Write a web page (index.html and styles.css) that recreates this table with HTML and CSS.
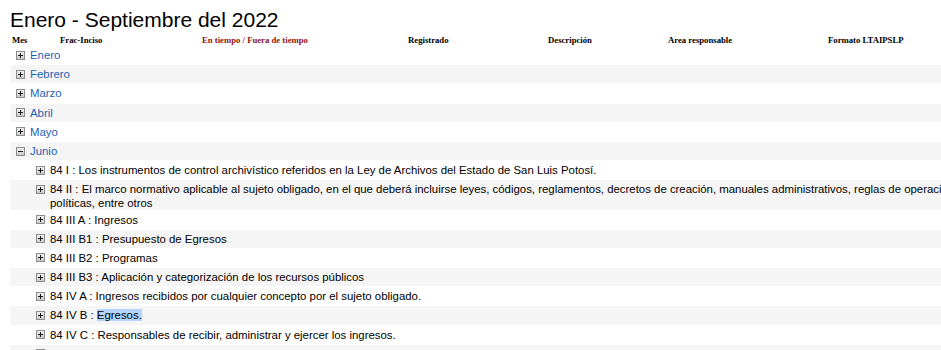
FILE: index.html
```html
<!DOCTYPE html>
<html lang="es">
<head>
<meta charset="utf-8">
<title>Enero - Septiembre del 2022</title>
<link rel="stylesheet" href="styles.css">
</head>
<body>
<svg width="0" height="0" class="defs">
  <defs>
    <linearGradient id="g" x1="0" y1="0" x2="0" y2="1">
      <stop offset="0" stop-color="#f4f4f4"/>
      <stop offset="1" stop-color="#c8c8c8"/>
    </linearGradient>
    <symbol id="plus" viewBox="0 0 9 9">
      <rect x="0.5" y="0.5" width="8" height="8" fill="url(#g)" stroke="#8c8c8c"/>
      <path d="M2 4.5h5M4.5 2v5" stroke="#1a1a1a" stroke-width="1"/>
    </symbol>
    <symbol id="minus" viewBox="0 0 9 9">
      <rect x="0.5" y="0.5" width="8" height="8" fill="url(#g)" stroke="#8c8c8c"/>
      <path d="M2 4.5h5" stroke="#1a1a1a" stroke-width="1"/>
    </symbol>
  </defs>
</svg>
<div class="page">
  <h1 class="title">Enero - Septiembre del 2022</h1>
  <div class="head">
    <span>Mes</span>
    <span>Frac-Inciso</span>
    <span class="red">En tiempo / Fuera de tiempo</span>
    <span>Registrado</span>
    <span>Descripción</span>
    <span>Area responsable</span>
    <span>Formato LTAIPSLP</span>
  </div>
  <ul class="list">
    <li class="row month"><svg class="ico"><use href="#plus"/></svg><a class="lnk">Enero</a></li>
    <li class="row month"><svg class="ico"><use href="#plus"/></svg><a class="lnk">Febrero</a></li>
    <li class="row month"><svg class="ico"><use href="#plus"/></svg><a class="lnk">Marzo</a></li>
    <li class="row month"><svg class="ico"><use href="#plus"/></svg><a class="lnk">Abril</a></li>
    <li class="row month"><svg class="ico"><use href="#plus"/></svg><a class="lnk">Mayo</a></li>
    <li class="row month"><svg class="ico"><use href="#minus"/></svg><a class="lnk">Junio</a></li>
    <li class="row item"><svg class="ico"><use href="#plus"/></svg><span class="txt">84 I : Los instrumentos de control archivístico referidos en la Ley de Archivos del Estado de San Luis Potosí.</span></li>
    <li class="row item wrap"><svg class="ico"><use href="#plus"/></svg><span class="txt">84 II : El marco normativo aplicable al sujeto obligado, en el que deberá incluirse leyes, códigos, reglamentos, decretos de creación, manuales administrativos, reglas de operación, criterios, políticas, entre otros</span></li>
    <li class="row item"><svg class="ico"><use href="#plus"/></svg><span class="txt">84 III A : Ingresos</span></li>
    <li class="row item"><svg class="ico"><use href="#plus"/></svg><span class="txt">84 III B1 : Presupuesto de Egresos</span></li>
    <li class="row item"><svg class="ico"><use href="#plus"/></svg><span class="txt">84 III B2 : Programas</span></li>
    <li class="row item"><svg class="ico"><use href="#plus"/></svg><span class="txt">84 III B3 : Aplicación y categorización de los recursos públicos</span></li>
    <li class="row item"><svg class="ico"><use href="#plus"/></svg><span class="txt">84 IV A : Ingresos recibidos por cualquier concepto por el sujeto obligado.</span></li>
    <li class="row item"><svg class="ico"><use href="#plus"/></svg><span class="txt">84 IV B : <span class="sel">Egresos.</span></span></li>
    <li class="row item"><svg class="ico"><use href="#plus"/></svg><span class="txt">84 IV C : Responsables de recibir, administrar y ejercer los ingresos.</span></li>
    <li class="row item"><svg class="ico"><use href="#plus"/></svg><span class="txt">84 V : Indicadores</span></li>
  </ul>
</div>
</body>
</html>
```

FILE: styles.css
```css
html, body {
  margin: 0;
  padding: 0;
  overflow: hidden;
  background: #fff;
}
.defs { position: absolute; }
.page {
  width: 1020px;
  padding: 8px 0 0 10px;
  font-family: "Liberation Sans", Arial, sans-serif;
}
.title {
  margin: 0;
  font-size: 21px;
  font-weight: normal;
  line-height: 24px;
  color: #000;
}
.head {
  display: grid;
  grid-template-columns: 48px 142px 206px 140px 120px 160px auto;
  padding: 3px 0 0 2px;
  font-family: "Liberation Serif", "Times New Roman", serif;
  font-weight: bold;
  font-size: 8.7px;
  line-height: 11px;
  color: #000;
}
.head .red { color: #8e1414; }
.list {
  list-style: none;
  margin: 0;
  padding: 0;
  font-size: 11.4px;
  line-height: 14px;
  color: #000;
}
.row {
  display: flex;
  align-items: flex-start;
  padding: 2.1px 0;
  margin-bottom: 1px;
}
.row.wrap {
  padding-bottom: 0;
  margin-bottom: 0;
}
.row:nth-child(even) { background: #f5f5f5; }
.ico {
  width: 9px;
  height: 9px;
  flex: none;
  margin-top: 2.5px;
  margin-right: 5px;
}
.month { padding-left: 6px; }
.item { padding-left: 26px; }
.lnk { color: #1c63b4; text-decoration: none; }
.sel { background: #b4d5fe; }
```
